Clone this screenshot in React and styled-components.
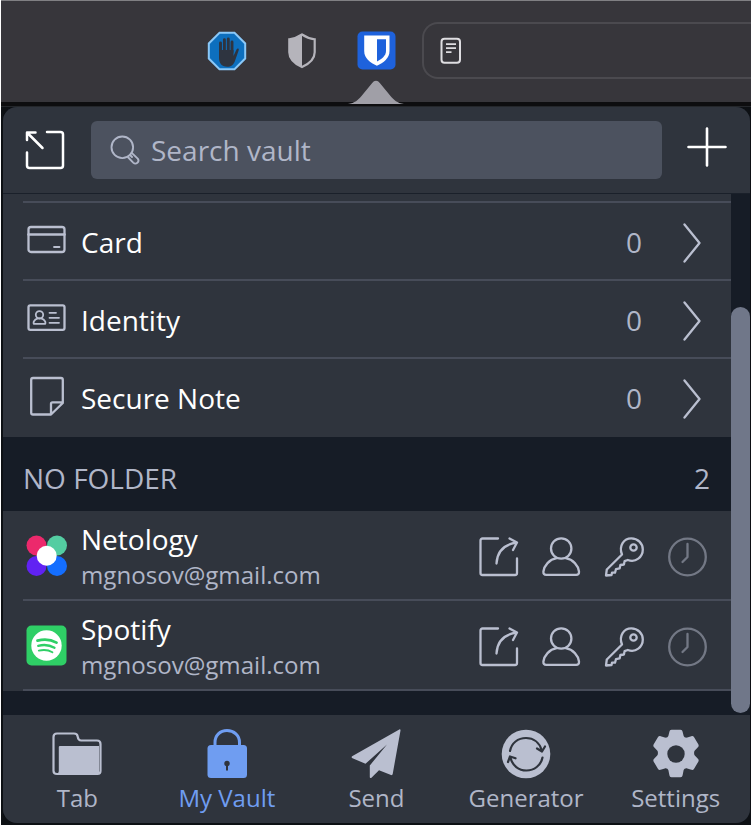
import React from "react";
import styled, { createGlobalStyle } from "styled-components";

const Global = createGlobalStyle`
  * { box-sizing: border-box; }
  body { margin: 0; background: #fff; font-family: "Open Sans", "Noto Sans", sans-serif; overflow: hidden; }
  svg { display: block; flex: none; }
`;

const Window = styled.div`
  width: 750px;
  height: 825px;
  margin-left: 1px;
  background: #0d1014;
  display: flex;
  flex-direction: column;
`;

const BrowserBar = styled.header`
  height: 102px;
  border-top: 1px solid #808083;
  background: #37363b;
  display: flex;
  align-items: flex-start;
  overflow: hidden;
  flex: none;
`;

const Extensions = styled.div`
  width: 421px;
  padding: 29.500px 26px 0 205.500px;
  display: flex;
  justify-content: space-between;
  flex: none;
`;

const AddressField = styled.div`
  flex: 1;
  height: 57px;
  margin-top: 21px;
  padding: 13px 0 0 16px;
  border: 2px solid #4b4a4f;
  border-right: 0;
  border-radius: 16px 0 0 16px;
`;

const Gap = styled.div`
  height: 5px;
  background: #0d0d0f;
  border-bottom: 1px solid #24272b;
  position: relative;
  flex: none;
`;

const Pointer = styled.svg`
  position: absolute;
  left: 346px;
  top: -23px;
`;

const Panel = styled.main`
  width: 747px;
  height: 716px;
  margin-left: 2px;
  border-radius: 14px;
  overflow: hidden;
  background: #161c26;
  display: flex;
  flex-direction: column;
`;

const SearchHeader = styled.div`
  height: 87px;
  padding: 14px 23px 0 21px;
  background: #2f343d;
  border-bottom: 1px solid #1a202a;
  display: flex;
  flex: none;
`;

const HeaderIcon = styled.div`
  width: ${(p) => p.$width}px;
  padding-top: ${(p) => p.$top}px;
  padding-left: ${(p) => p.$left || 0}px;
  display: flex;
  justify-content: ${(p) => p.$justify || "flex-start"};
  flex: none;
`;

const SearchBox = styled.div`
  width: 571px;
  height: 58px;
  border-radius: 6px;
  background: #4c525f;
  color: #b0b6c8;
  padding-left: 19px;
  display: flex;
  align-items: center;
  gap: 11px;
  font-size: 28px;
  flex: none;
`;

const Body = styled.div`
  height: 521px;
  display: flex;
  flex: none;
`;

const List = styled.div`
  width: 728px;
  flex: none;
`;

const Rows = styled.div`
  background: #2f343d;
  padding-top: ${(p) => p.$top || 0}px;
  padding-bottom: ${(p) => p.$bottom || 0}px;
`;

const TypeRow = styled.div`
  height: 78px;
  margin-left: 20px;
  padding: 3px 29px 0 4px;
  border-top: 2px solid #474c59;
  display: flex;
  align-items: center;
  color: #fff;
  font-size: 28px;
`;

const Label = styled.span`
  flex: 1;
  padding: 0 0 2px 14px;
  line-height: 38px;
`;

const Count = styled.span`
  color: #b0b6c8;
  margin-right: 40px;
  padding-bottom: 2px;
  line-height: 38px;
`;

const FolderHeading = styled.div`
  height: 74px;
  padding: 9px 21px 0 20px;
  color: #b0b6c8;
  display: flex;
  justify-content: space-between;
  align-items: flex-start;
  line-height: 64px;
  font-size: 28px;
`;

const ItemRow = styled.div`
  height: 90px;
  margin-left: 20px;
  padding: 0 23px 0 3px;
  border-bottom: 2px solid #474c59;
  display: flex;
  align-items: center;
`;

const ItemText = styled.div`
  flex: 1;
  margin: 3px 0 0 14px;
  display: flex;
  flex-direction: column;
`;

const ItemName = styled.span`
  color: #fff;
  font-size: 28px;
  line-height: 36px;
`;

const ItemUser = styled.span`
  color: #b0b6c8;
  font-size: 24.100px;
  line-height: 35px;
`;

const Actions = styled.div`
  display: flex;
  gap: 23px;
  padding-top: 4px;
`;

const Track = styled.div`
  width: 20px;
  padding-top: 113px;
`;

const Thumb = styled.div`
  height: 406px;
  border-radius: 10px;
  background: #707789;
`;

const Nav = styled.nav`
  height: 108px;
  background: #2f343d;
  display: grid;
  grid-template-columns: repeat(5, 149.6px);
`;

const NavItem = styled.div`
  display: flex;
  flex-direction: column;
  align-items: center;
  padding: 14px 1px 0 0;
  color: ${(p) => (p.$active ? "#6f9df1" : "#babfd0")};
`;

const NavLabel = styled.span`
  font-size: 24px;
  line-height: 34px;
  margin-top: 2px;
  color: ${(p) => (p.$active ? "#6f9df1" : "#b0b6c8")};
`;

const Line = ({ size = 40, color = "#babfd0", width = 2.3, children, ...rest }) => (
  <svg width={size} height={size} viewBox={`0 0 ${size} ${size}`} fill="none" stroke={color}
    strokeWidth={width} strokeLinecap="round" strokeLinejoin="round" {...rest}>{children}</svg>
);

const StopHandIcon = () => (
  <svg width="40" height="40" viewBox="0 0 40 40">
    <path d="M12.5 1.8h15L38.2 12.5v15L27.5 38.2h-15L1.8 27.5v-15z" fill="#0d6fbe" stroke="#8ac8f8" strokeWidth="2" />
    <g stroke="#2e3440" strokeWidth="2.9" strokeLinecap="round" fill="none">
      <path d="M13.5 22V12M17.4 20V8.8M21.3 20V8M25 21V11" />
    </g>
    <path d="M12 19h14.5v6l3-6.500c.8-1.600 2.800-1.200 2.200.8l-3.500 10c-1.600 4.800-4 6.500-8 6.500-5.800 0-8.200-4-8.200-9z" fill="#2e3440" />
  </svg>
);

const ShieldIcon = () => (
  <svg width="30" height="38" viewBox="0 -2 30 38">
    <path d="M15 1.500c4 2.800 8 4.200 12.700 4.800v13c0 7-5.500 11.500-12.700 14.800C7.800 30.800 2.300 26.300 2.300 19.300v-13C7 5.700 11 4.300 15 1.500z" fill="none" stroke="#b5b4bb" strokeWidth="2.2" />
    <path d="M15 1.500v32.600C7.800 30.800 2.300 26.300 2.300 19.300v-13C7 5.700 11 4.300 15 1.500z" fill="#b5b4bb" />
  </svg>
);

const VaultIcon = () => (
  <svg width="39" height="39" viewBox="0 0 39 39">
    <rect x=".5" y=".5" width="38" height="38" rx="5" fill="#1e62dc" />
    <path d="M7.200 4.500h25.300v15.500c0 7.500-6 11.500-12.600 14.800C13.200 31.500 7.200 27.500 7.200 20z" fill="#fff" />
    <path d="M20 8.200h9V20c0 5-4.500 8-9 10.500z" fill="#1e62dc" />
  </svg>
);

const ReaderIcon = () => (
  <svg width="22" height="28" viewBox="0 0 22 28" fill="none" stroke="#dedde1">
    <rect x="1.500" y="1.800" width="18.500" height="24" rx="3" strokeWidth="2" />
    <path d="M6 7.200h10M6 11.200h10M6 15.200h5.500" strokeWidth="1.700" />
  </svg>
);

const PopoutIcon = () => (
  <Line color="#fff" width={2.5}>
    <path d="M22 2h13.500a2.500 2.500 0 0 1 2.500 2.500v31a2.500 2.500 0 0 1-2.500 2.500h-31A2.500 2.500 0 0 1 2 35.500V22.500M2 10V2.500h8.500M2.500 3l15 15" />
  </Line>
);

const SearchIcon = () => (
  <Line size={30} color="#b0b6c8" width={1.9}>
    <circle cx="12.300" cy="12.300" r="10.800" />
    <path d="M17.800 22l5.400 5.600c2.800 2.600 6.800-.8 4.500-4L22 18.100M20 20l2 2" />
  </Line>
);

const PlusIcon = () => <Line color="#fff" width={2.6}><path d="M20 1.500v37M1.500 20h37" /></Line>;

const ChevronIcon = () => (
  <svg width="20" height="40" viewBox="0 0 20 40" fill="none" stroke="#babfd0" strokeWidth="2.3" strokeLinecap="round" strokeLinejoin="round"><path d="M2.500 1.500L17.500 20l-15 18.500" /></svg>
);

const CardIcon = () => (
  <Line><rect x="1.500" y="4" width="36" height="25" rx="2.500" /><path d="M1.500 11.500h36" strokeWidth="2.600" /><path d="M27 24h5.500" strokeWidth="1.800" /></Line>
);

const IdentityIcon = () => (
  <Line><rect x="1.500" y="4.300" width="36" height="24.500" rx="1.800" />
    <g strokeWidth="1.800"><circle cx="12.500" cy="13.800" r="3.700" /><path d="M7 22.800c-.9 0-.7-4.600 4-5.500h3c4.700.9 4.900 5.500 4 5.500zM22.500 11.800h6.500M22.500 16.800h9.500M22.500 21.800h9.500" /></g></Line>
);

const NoteIcon = () => (
  <Line viewBox="0 2 40 40" overflow="visible"><path d="M6 1h28a1.800 1.800 0 0 1 1.800 1.800V26L24 37.500H6a1.800 1.800 0 0 1-1.800-1.800V2.800A1.800 1.800 0 0 1 6 1zM24 37V26.800a1.500 1.500 0 0 1 1.500-1.500H35.500" /></Line>
);

const LaunchIcon = () => (
  <Line><path d="M19 1.500H3.500a2 2 0 0 0-2 2V36a2 2 0 0 0 2 2H36a2 2 0 0 0 2-2V21.500M17.500 26.500C18 15 25 7.500 37.500 5.500M30.500 1.500l7.500 4-4 7.500" /></Line>
);

const UserIcon = () => (
  <Line viewBox=".8 0 40 40"><circle cx="20" cy="11.500" r="10.200" /><path d="M15.500 21.200C8 22.500 3 28.500 2.200 34.500c-.2 2.200.8 3.300 2.800 3.300h30c2 0 3-1.100 2.800-3.300C37 28.500 32 22.500 24.500 21.200" /></Line>
);

const KeyIcon = () => (
  <Line viewBox="1 0 40 40" overflow="visible"><circle cx="29.500" cy="10.500" r="3.200" /><path d="M18 17.500C14.500 8.500 20 1.300 27.300 1.300c6.600 0 11.500 5 11.500 11.200 0 7.500-7 13.400-15 10.500l-3.200 1.200-.7 3.300-3.500.5-.8 3.400-3.600.7-1 3.600h-3L7.500 38l-5.500.5.800-6z" /></Line>
);

const ClockIcon = () => (
  <Line color="#737885" viewBox=".5 0 40 40"><circle cx="20" cy="20" r="18.300" /><path d="M20 7v13l-5 5" /></Line>
);

const NetologyLogo = () => (
  <svg width="41" height="41" viewBox="0 0 41 41">
    <circle cx="10.500" cy="10.500" r="10" fill="#ec296c" /><circle cx="31" cy="10.500" r="10" fill="#54cda2" />
    <circle cx="10.500" cy="31" r="10" fill="#6122f3" /><circle cx="31" cy="31" r="10" fill="#146eff" />
    <circle cx="20.700" cy="20.700" r="10" fill="#fff" />
  </svg>
);

const SpotifyLogo = () => (
  <svg width="41" height="41" viewBox="0 0 41 41" fill="none" stroke="#2fcf66" strokeLinecap="round">
    <rect x=".5" y=".5" width="40" height="40" rx="5" fill="#2fcf66" stroke="none" />
    <circle cx="20.500" cy="20.500" r="15.200" fill="#fff" stroke="none" />
    <path d="M11.500 15.600c7-1.800 13.500-1.100 19 2" strokeWidth="2.800" />
    <path d="M12.200 20.800c6-1.500 11.500-.8 16.300 1.900" strokeWidth="2.300" />
    <path d="M12.800 25.600c5-1.200 9.700-.7 13.600 1.600" strokeWidth="1.900" />
  </svg>
);

const FolderIcon = () => (
  <svg width="50" height="50" viewBox="0 0 50 50">
    <path d="M5 4.500h17c2 0 3.500 1.200 3.700 3.200.3 2.500 1.300 3.800 3.500 3.800H45c2.500 0 3.500 1.200 3.500 3.500v27c0 2-1 3-3 3H5c-2.200 0-3.500-1.200-3.500-3.300V8C1.500 5.700 2.800 4.500 5 4.500z" fill="none" stroke="currentColor" strokeWidth="2.200" />
    <path d="M7.500 17h39.500v27.500H5c1.500-.5 1.800-1.500 1.800-3V17.700z" fill="currentColor" />
  </svg>
);

const LockIcon = () => (
  <svg width="50" height="50" viewBox="0 0 50 50">
    <path d="M13 18v-4.500C13 6.500 18 1.600 25 1.600S37.500 6.500 37.500 13.500V18" fill="none" stroke="currentColor" strokeWidth="3" />
    <rect x="5.500" y="16" width="39.500" height="33" rx="3.500" fill="currentColor" />
    <circle cx="25" cy="34.500" r="2.700" fill="#2f343d" /><path d="M25 35v6.500" stroke="#2f343d" strokeWidth="2" />
  </svg>
);

const SendIcon = () => (
  <svg width="50" height="50" viewBox="0 0 50 50" fill="currentColor">
    <path d="M48.300.5c.8-.4 1.300.1 1.200 1L41.700 45c-.2 1-.8 1.400-1.700 1L28 41.200 20.700 48.500c-.9.900-1.900.6-1.900-.6V36.500L36 15.500 14.500 34.800 1.500 29.200c-1.200-.6-1.200-1.400 0-2.100z" />
  </svg>
);

const GeneratorIcon = () => (
  <svg width="50" height="50" viewBox="0 0 50 50">
    <circle cx="25" cy="25" r="24.300" fill="currentColor" />
    <g fill="none" stroke="#2f343d" strokeWidth="2.200" strokeLinecap="round" strokeLinejoin="round">
      <path d="M9 22C10.500 14 17 9 25 9c7.500 0 13.500 4.500 15.800 12.500M36 19.500l5 3 3-5M41.500 28.500C40 36.500 33 41.500 25.500 41.500c-8 0-14-5-16-12.500M7 33l2-5.500 5.500 1.800" />
    </g>
  </svg>
);

const GearIcon = () => (
  <svg width="50" height="50" viewBox="0 0 50 50">
    <path d="M20.500.7h9c1.300 0 1.800.7 2.100 2l1 4c.4 1.400 2.200 2.300 3.600 1.800l4.200-1.300c1.200-.4 2 0 2.700 1.100l4.200 7c.6 1.200.5 2-.4 2.900l-3.100 3.200c-1 1.200-1 3.700 0 5.200l3.100 3.200c.9.900 1 1.700.4 2.900l-4.200 7c-.7 1.100-1.500 1.500-2.700 1.100l-4.200-1.300c-1.400-.5-3.200.4-3.600 1.800l-1 5c-.3 1.300-.8 2-2.100 2h-9c-1.300 0-1.800-.7-2.100-2l-1-5c-.4-1.400-2.200-2.300-3.600-1.800L9.600 40.800c-1.200.4-2 0-2.700-1.100l-4.200-7c-.6-1.200-.5-2 .4-2.900l3.100-3.200c1-1.500 1-4 0-5.200l-3.100-3.200c-.9-.9-1-1.700-.4-2.900l4.200-7c.7-1.100 1.500-1.500 2.700-1.100l4.200 1.300c1.400.5 3.200-.4 3.600-1.800l1-4c.3-1.300.8-2 2.100-2z" fill="currentColor" />
    <circle cx="25" cy="25" r="8.700" fill="#2f343d" />
  </svg>
);

const types = [["Card", CardIcon], ["Identity", IdentityIcon], ["Secure Note", NoteIcon]];
const items = [["Netology", NetologyLogo], ["Spotify", SpotifyLogo]];
const tabs = [["Tab", FolderIcon], ["My Vault", LockIcon], ["Send", SendIcon], ["Generator", GeneratorIcon], ["Settings", GearIcon]];

export default function App() {
  return (
    <>
      <Global />
      <Window>
        <BrowserBar>
          <Extensions><StopHandIcon /><ShieldIcon /><VaultIcon /></Extensions>
          <AddressField><ReaderIcon /></AddressField>
        </BrowserBar>
        <Gap>
          <Pointer width="58" height="26" viewBox="0 0 58 26">
            <path d="M1 25c7-1 10-4 13.500-8L25 4.200c2.500-3.300 5.500-3.300 8 0L43.500 17c3.500 4 6.500 7 13.500 8z" fill="#a09fa7" />
          </Pointer>
        </Gap>
        <Panel>
          <SearchHeader>
            <HeaderIcon $width={67} $top={8.5} $left={1}><PopoutIcon /></HeaderIcon>
            <SearchBox><SearchIcon />Search vault</SearchBox>
            <HeaderIcon $width={64.5} $top={6} $justify="flex-end"><PlusIcon /></HeaderIcon>
          </SearchHeader>
          <Body>
            <List>
              <Rows $top={7} $bottom={2}>
                {types.map(([name, Icon]) => (
                  <TypeRow key={name}><Icon /><Label>{name}</Label><Count>0</Count><ChevronIcon /></TypeRow>
                ))}
              </Rows>
              <FolderHeading><span>NO FOLDER</span><span>2</span></FolderHeading>
              <Rows>
                {items.map(([name, Logo]) => (
                  <ItemRow key={name}>
                    <Logo />
                    <ItemText><ItemName>{name}</ItemName><ItemUser>mgnosov@gmail.com</ItemUser></ItemText>
                    <Actions><LaunchIcon /><UserIcon /><KeyIcon /><ClockIcon /></Actions>
                  </ItemRow>
                ))}
              </Rows>
            </List>
            <Track><Thumb /></Track>
          </Body>
          <Nav>
            {tabs.map(([name, Icon]) => {
              const active = name === "My Vault";
              return <NavItem key={name} $active={active}><Icon /><NavLabel $active={active}>{name}</NavLabel></NavItem>;
            })}
          </Nav>
        </Panel>
      </Window>
    </>
  );
}
